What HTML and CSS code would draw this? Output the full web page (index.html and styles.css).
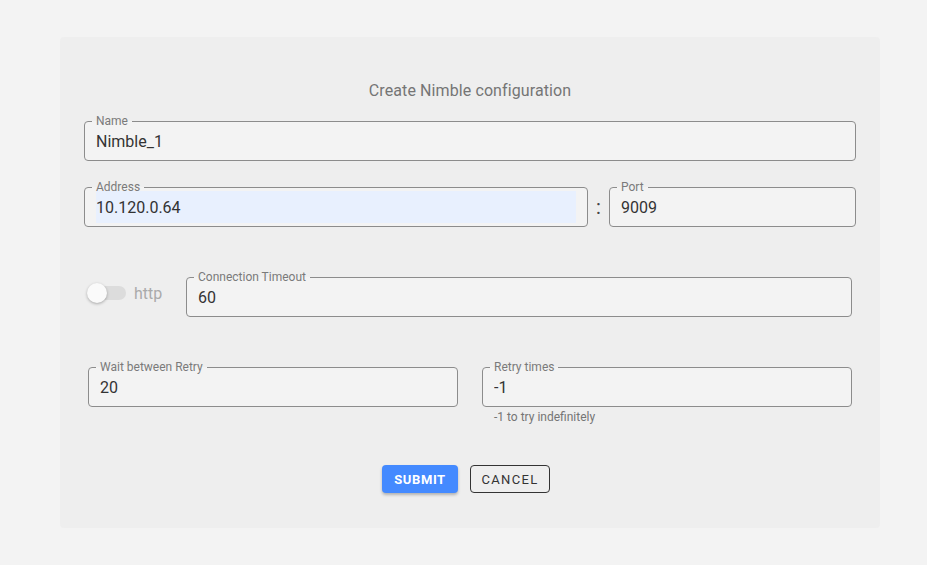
FILE: index.html
```html
<!DOCTYPE html>
<html lang="en">
<head>
    <meta charset="UTF-8">
    <meta name="viewport" content="width=device-width, initial-scale=1.0">
    <title>Create Nimble configuration</title>
    <link rel="stylesheet" href="styles.css">
</head>
<body>
    <div class="card">
        <div class="card-title">Create Nimble configuration</div>

        <fieldset class="field">
            <legend>Name</legend>
            <input type="text" value="Nimble_1">
        </fieldset>

        <div class="address-row">
            <fieldset class="field address">
                <legend>Address</legend>
                <input type="text" class="autofilled" value="10.120.0.64">
            </fieldset>
            <span class="colon">:</span>
            <fieldset class="field port">
                <legend>Port</legend>
                <input type="text" value="9009">
            </fieldset>
        </div>

        <div class="timeout-row">
            <label class="toggle">
                <span class="switch"><span class="thumb"></span></span>
                <span class="toggle-text">http</span>
            </label>
            <fieldset class="field grow">
                <legend>Connection Timeout</legend>
                <input type="text" value="60">
            </fieldset>
        </div>

        <div class="retry-row">
            <div>
                <fieldset class="field">
                    <legend>Wait between Retry</legend>
                    <input type="text" value="20">
                </fieldset>
            </div>
            <div>
                <fieldset class="field">
                    <legend>Retry times</legend>
                    <input type="text" value="-1">
                </fieldset>
                <div class="helper">-1 to try indefinitely</div>
            </div>
        </div>

        <div class="actions">
            <button class="submit">Submit</button>
            <button class="cancel">Cancel</button>
        </div>
    </div>
</body>
</html>
```

FILE: styles.css
```css
* {
    margin: 0;
    padding: 0;
    box-sizing: border-box;
    font-family: Roboto, "Liberation Sans", Arial, sans-serif;
}

body {
    background-color: #f3f3f3;
    padding: 37px 0 0 60px;
    min-height: 100vh;
}

.card {
    width: 820px;
    background-color: #eeeeee;
    border-radius: 4px;
    padding: 42px 24px 35px;
}

.card-title {
    text-align: center;
    font-size: 16px;
    line-height: 24px;
    color: #757575;
    letter-spacing: 0.1px;
    margin-bottom: 11px;
}

.field {
    display: block;
    min-width: 0;
    border: 1px solid #8c8c8c;
    border-radius: 4px;
    background-color: #f3f3f3;
    padding: 0 11px;
}

.field legend {
    font-size: 12px;
    line-height: 14px;
    color: #7a7a7a;
    padding: 0 4px;
    margin-left: -4px;
}

.field input {
    display: block;
    width: 100%;
    height: 32px;
    margin: -3px 0 3px;
    border: none;
    outline: none;
    background: transparent;
    font-size: 16px;
    color: #333;
}

.field input.autofilled {
    background-color: #e8f0fe;
}

.address-row {
    display: flex;
    align-items: flex-start;
    margin-top: 19px;
}

.address {
    width: 504px;
    flex: none;
}

.colon {
    width: 21px;
    flex: none;
    text-align: center;
    font-size: 20px;
    line-height: 24px;
    color: #444;
    margin-top: 15px;
}

.port {
    flex: 1;
}

.timeout-row {
    display: flex;
    align-items: flex-start;
    margin: 43px 4px 0;
}

.toggle {
    width: 98px;
    flex: none;
    display: flex;
    align-items: center;
    height: 20px;
    margin-top: 13px;
}

.switch {
    position: relative;
    width: 34px;
    height: 14px;
    margin-left: 4px;
    border-radius: 7px;
    background-color: #dcdcdc;
}

.thumb {
    position: absolute;
    left: -5px;
    top: -3px;
    width: 20px;
    height: 20px;
    border-radius: 50%;
    background-color: #fafafa;
    box-shadow: 0 1px 3px rgba(0,0,0,0.3);
}

.toggle-text {
    margin-left: 8px;
    font-size: 16px;
    color: #aaa;
}

.grow {
    flex: 1;
}

.retry-row {
    display: grid;
    grid-template-columns: 1fr 1fr;
    gap: 24px;
    margin: 43px 4px 0;
}

.helper {
    font-size: 12px;
    line-height: 14px;
    color: #757575;
    margin-top: 3px;
    padding-left: 12px;
}

.actions {
    display: flex;
    justify-content: center;
    gap: 12px;
    margin-top: 41px;
    padding-right: 8px;
}

button {
    height: 28px;
    border-radius: 4px;
    font-size: 13px;
    text-transform: uppercase;
    cursor: pointer;
}

.submit {
    width: 76px;
    border: none;
    background-color: #448aff;
    color: white;
    font-weight: 700;
    letter-spacing: 0.6px;
    box-shadow: 0 2px 3px rgba(0,0,0,0.25);
}

.cancel {
    width: 80px;
    border: 1px solid #333;
    background-color: transparent;
    color: #333;
    font-weight: 400;
    letter-spacing: 1.3px;
}
```
